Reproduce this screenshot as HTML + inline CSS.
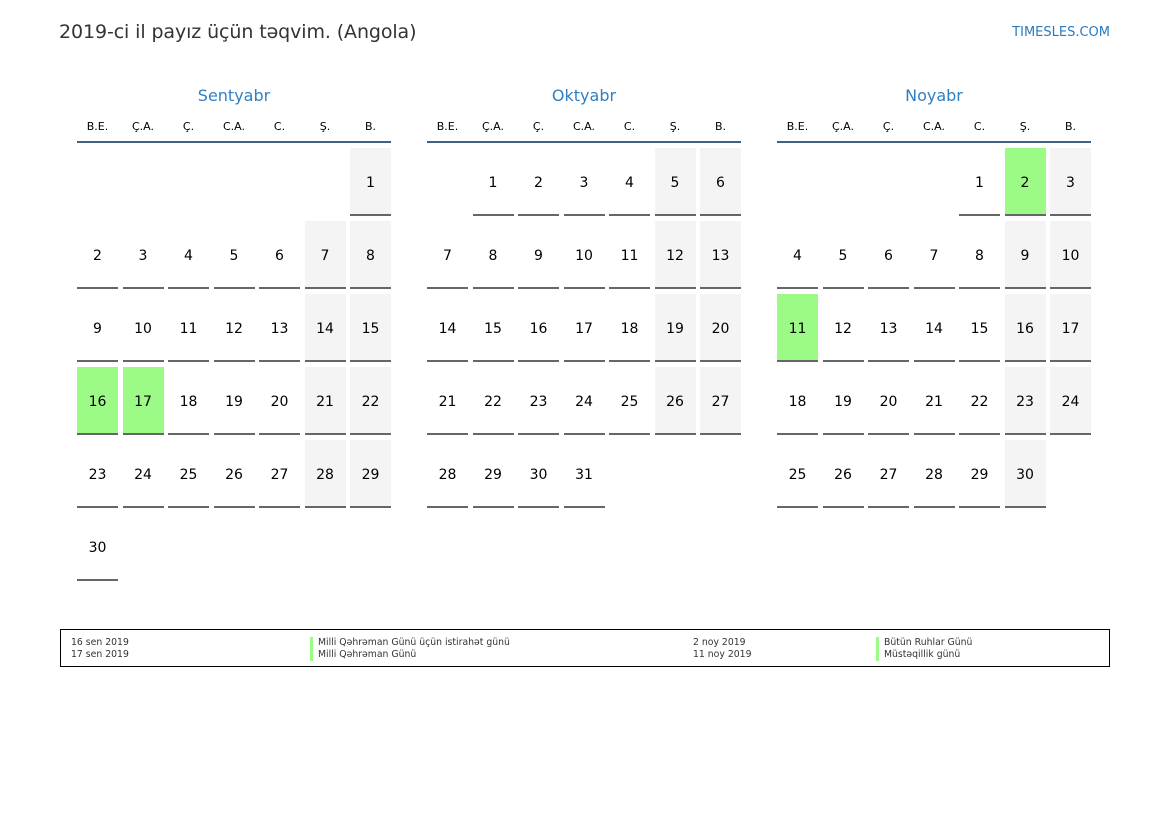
<!DOCTYPE html><html><head><meta charset="utf-8"><style>
*{margin:0;padding:0;box-sizing:border-box}
body{width:1169px;height:827px;background:#fff;font-family:"DejaVu Sans","Liberation Sans",sans-serif;position:relative;overflow:hidden;color:#000}
.t{position:absolute;left:59px;top:21px;font-size:19px;letter-spacing:-0.1px;color:#333}
.w{position:absolute;right:59px;top:25px;font-size:13px;color:#2a7ac0}
.m{position:absolute;top:84px;width:314px}
.mt{text-align:center;font-size:16px;color:#2f7fc4;height:24px;line-height:24px}
.dh{display:grid;grid-template-columns:repeat(7,41px);column-gap:4.5px;font-size:11px;text-align:center;height:35px;line-height:38px;border-bottom:2px solid #3f5f85}
.g{display:grid;grid-template-columns:repeat(7,41px);grid-auto-rows:68px;gap:5px 4.5px;margin-top:5px}
.g div{font-size:14px;text-align:center;line-height:70px;border-bottom:2px solid #666}
.g div.e{border:none}
.g div.s{background:#f4f4f4}
.g div.h{background:#9cfa86}
.lg{position:absolute;left:60px;top:629px;width:1050px;height:38px;border:1.5px solid #000;font-size:9.3px;color:#333}
.lg span{position:absolute;line-height:12px}
.b{border-left:3px solid #9cfa86;padding-left:5px}
</style></head><body>
<div class="t">2019-ci il payız üçün təqvim. (Angola)</div>
<div class="w">TIMESLES.COM</div>

<div class="m" style="left:77px"><div class="mt">Sentyabr</div>
<div class="dh"><span>B.E.</span><span>Ç.A.</span><span>Ç.</span><span>C.A.</span><span>C.</span><span>Ş.</span><span>B.</span></div>
<div class="g">
<div class="e"></div><div class="e"></div><div class="e"></div><div class="e"></div><div class="e"></div><div class="e"></div><div class="s">1</div>
<div>2</div><div>3</div><div>4</div><div>5</div><div>6</div><div class="s">7</div><div class="s">8</div>
<div>9</div><div>10</div><div>11</div><div>12</div><div>13</div><div class="s">14</div><div class="s">15</div>
<div class="h">16</div><div class="h">17</div><div>18</div><div>19</div><div>20</div><div class="s">21</div><div class="s">22</div>
<div>23</div><div>24</div><div>25</div><div>26</div><div>27</div><div class="s">28</div><div class="s">29</div>
<div>30</div>
</div></div>

<div class="m" style="left:427px"><div class="mt">Oktyabr</div>
<div class="dh"><span>B.E.</span><span>Ç.A.</span><span>Ç.</span><span>C.A.</span><span>C.</span><span>Ş.</span><span>B.</span></div>
<div class="g">
<div class="e"></div><div>1</div><div>2</div><div>3</div><div>4</div><div class="s">5</div><div class="s">6</div>
<div>7</div><div>8</div><div>9</div><div>10</div><div>11</div><div class="s">12</div><div class="s">13</div>
<div>14</div><div>15</div><div>16</div><div>17</div><div>18</div><div class="s">19</div><div class="s">20</div>
<div>21</div><div>22</div><div>23</div><div>24</div><div>25</div><div class="s">26</div><div class="s">27</div>
<div>28</div><div>29</div><div>30</div><div>31</div>
</div></div>

<div class="m" style="left:777px"><div class="mt">Noyabr</div>
<div class="dh"><span>B.E.</span><span>Ç.A.</span><span>Ç.</span><span>C.A.</span><span>C.</span><span>Ş.</span><span>B.</span></div>
<div class="g">
<div class="e"></div><div class="e"></div><div class="e"></div><div class="e"></div><div>1</div><div class="h">2</div><div class="s">3</div>
<div>4</div><div>5</div><div>6</div><div>7</div><div>8</div><div class="s">9</div><div class="s">10</div>
<div class="h">11</div><div>12</div><div>13</div><div>14</div><div>15</div><div class="s">16</div><div class="s">17</div>
<div>18</div><div>19</div><div>20</div><div>21</div><div>22</div><div class="s">23</div><div class="s">24</div>
<div>25</div><div>26</div><div>27</div><div>28</div><div>29</div><div class="s">30</div>
</div></div>

<div class="lg">
<span style="left:10px;top:7px">16 sen 2019</span><span style="left:10px;top:19px">17 sen 2019</span>
<span class="b" style="left:249px;top:7px">Milli Qəhrəman Günü üçün istirahət günü</span><span class="b" style="left:249px;top:19px">Milli Qəhrəman Günü</span>
<span style="left:632px;top:7px">2 noy 2019</span><span style="left:632px;top:19px">11 noy 2019</span>
<span class="b" style="left:815px;top:7px">Bütün Ruhlar Günü</span><span class="b" style="left:815px;top:19px">Müstəqillik günü</span>
</div>
</body></html>
